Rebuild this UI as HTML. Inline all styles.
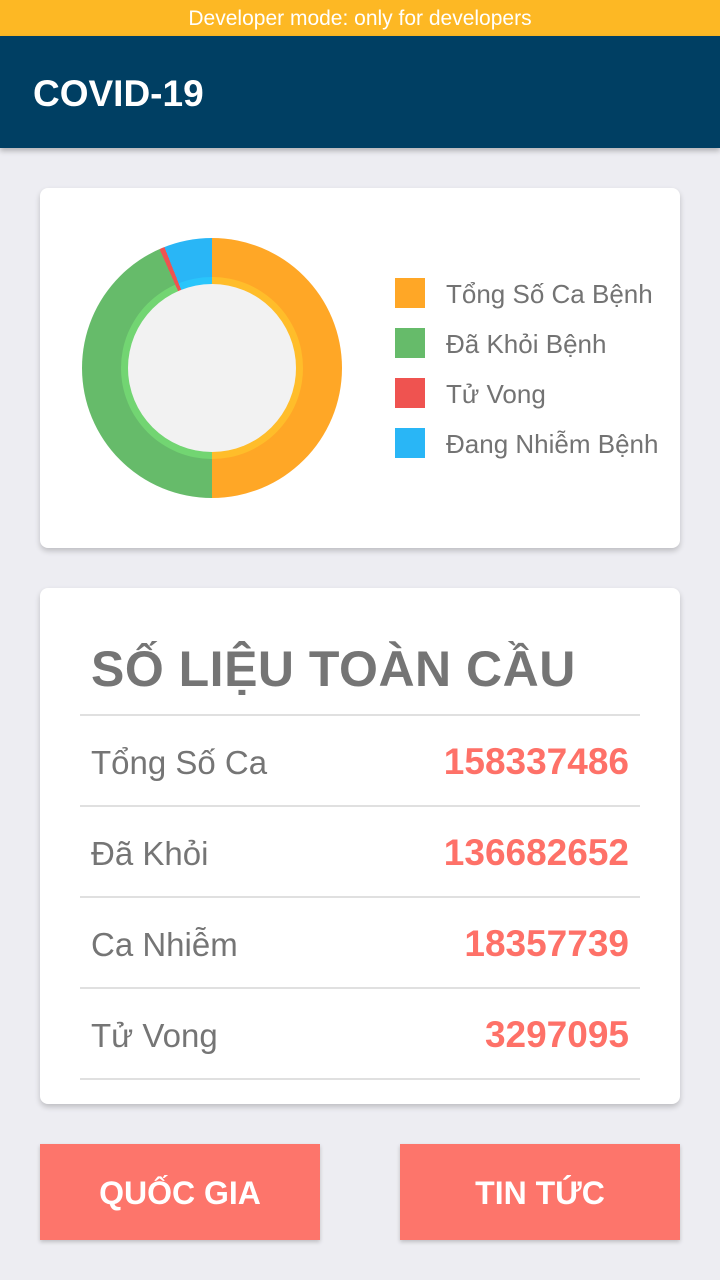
<!DOCTYPE html>
<html><head><meta charset="utf-8"><style>
*{margin:0;padding:0;box-sizing:border-box}
body{width:720px;height:1280px;background:#ededf2;font-family:"Liberation Sans",sans-serif;position:relative;overflow:hidden}
.dev{position:absolute;left:0;top:0;width:720px;height:36px;background:#fdb824;color:#fff;font-size:21px;text-align:center;line-height:38px}
.bar{position:absolute;left:0;top:36px;width:720px;height:112px;background:#003f63;box-shadow:0 3px 5px rgba(0,0,0,.25)}
.bar span{position:absolute;left:33px;top:37px;color:#fff;font-size:37px;font-weight:bold}
.card{position:absolute;background:#fff;border-radius:8px;box-shadow:0 3px 6px rgba(0,0,0,.2)}
.donut{position:absolute;left:82px;top:238px;width:260px;height:260px;border-radius:50%;
background:conic-gradient(#ffa726 0 180deg,#66bb6a 180deg 336.2deg,#ef5350 336.2deg 338.5deg,#29b6f6 338.5deg 360deg)}
.ring{position:absolute;left:39px;top:39px;width:182px;height:182px;border-radius:50%;
background:conic-gradient(#ffbd2a 0 180deg,#72d572 180deg 336.2deg,#ef5350 336.2deg 338.5deg,#29c5fb 338.5deg 360deg)}
.hole{position:absolute;left:46px;top:46px;width:168px;height:168px;border-radius:50%;background:#f2f2f2}
.lg{position:absolute;left:395px;width:320px;height:30px;color:#737373;font-size:26px;line-height:32px;white-space:nowrap}
.lg i{display:inline-block;width:30px;height:30px;vertical-align:top;margin-right:21px}
.title{position:absolute;left:91px;top:640px;font-size:50px;font-weight:bold;color:#757575;white-space:nowrap;letter-spacing:0.5px}
.line{position:absolute;left:80px;width:560px;height:2px;background:#e0e0e0}
.lab{position:absolute;left:91px;font-size:33px;color:#757575}
.num{position:absolute;right:91px;font-size:37px;font-weight:bold;color:#fe7168}
.btn{position:absolute;top:1144px;width:280px;height:96px;background:#fd756b;color:#fff;font-size:32px;font-weight:bold;text-align:center;line-height:98px;box-shadow:0 2px 4px rgba(0,0,0,.2)}
</style></head><body>
<div class="dev">Developer mode: only for developers</div>
<div class="bar"><span>COVID-19</span></div>
<div class="card" style="left:40px;top:188px;width:640px;height:360px"></div>
<div class="donut"><div class="ring"></div><div class="hole"></div></div>
<div class="lg" style="top:278px"><i style="background:#ffa726"></i>Tổng Số Ca Bệnh</div>
<div class="lg" style="top:328px"><i style="background:#66bb6a"></i>Đã Khỏi Bệnh</div>
<div class="lg" style="top:378px"><i style="background:#ef5350"></i>Tử Vong</div>
<div class="lg" style="top:428px"><i style="background:#29b6f6"></i>Đang Nhiễm Bệnh</div>
<div class="card" style="left:40px;top:588px;width:640px;height:516px"></div>
<div class="title">SỐ LIỆU TOÀN CẦU</div>
<div class="line" style="top:714px"></div>
<div class="line" style="top:805px"></div>
<div class="line" style="top:896px"></div>
<div class="line" style="top:987px"></div>
<div class="line" style="top:1078px"></div>
<div class="lab" style="top:744px">Tổng Số Ca</div><div class="num" style="top:741px">158337486</div>
<div class="lab" style="top:835px">Đã Khỏi</div><div class="num" style="top:832px">136682652</div>
<div class="lab" style="top:926px">Ca Nhiễm</div><div class="num" style="top:923px">18357739</div>
<div class="lab" style="top:1017px">Tử Vong</div><div class="num" style="top:1014px">3297095</div>
<div class="btn" style="left:40px">QUỐC GIA</div>
<div class="btn" style="left:400px">TIN TỨC</div>
</body></html>
